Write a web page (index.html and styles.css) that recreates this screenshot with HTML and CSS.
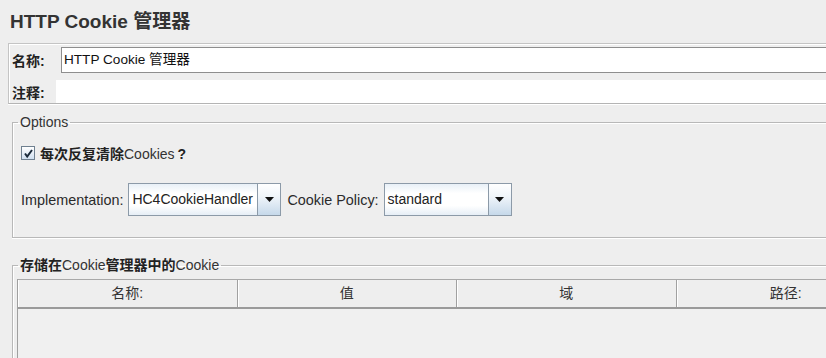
FILE: index.html
```html
<!DOCTYPE html>
<html>
<head>
<meta charset="utf-8">
<link rel="stylesheet" href="styles.css">
</head>
<body>
<div class="page">
  <h1 class="title">HTTP Cookie 管理器</h1>

  <div class="namepanel">
    <div class="row name-row">
      <span class="lbl">名称:</span>
      <div class="field">HTTP Cookie 管理器</div>
    </div>
    <div class="row comment-row">
      <span class="lbl">注释:</span>
      <div class="area"></div>
    </div>
  </div>

  <fieldset class="group options">
    <legend class="legend">Options</legend>
    <div class="check-row">
      <span class="checkbox">
        <svg width="11" height="11" viewBox="0 0 11 11"><path d="M2 5.5 L4.2 8.5 L9 2" fill="none" stroke="#1a2a3a" stroke-width="2"/></svg>
      </span>
      <span class="check-label"><b>每次反复清除</b>Cookies<b class="q">?</b></span>
    </div>
    <div class="combo-row">
      <span class="clbl">Implementation:</span>
      <div class="combo c1">
        <span class="combo-text">HC4CookieHandler</span>
        <span class="combo-btn"><svg width="9" height="5" viewBox="0 0 9 5"><path d="M0 0 H9 L4.5 5 Z" fill="#111"/></svg></span>
      </div>
      <span class="clbl">Cookie Policy:</span>
      <div class="combo c2">
        <span class="combo-text">standard</span>
        <span class="combo-btn"><svg width="9" height="5" viewBox="0 0 9 5"><path d="M0 0 H9 L4.5 5 Z" fill="#111"/></svg></span>
      </div>
    </div>
  </fieldset>

  <fieldset class="group stored">
    <legend class="legend"><b>存储在</b>Cookie<b>管理器中的</b>Cookie</legend>
    <div class="table">
      <div class="thead">
        <div class="th">名称:</div>
        <div class="th">值</div>
        <div class="th">域</div>
        <div class="th">路径:</div>
      </div>
      <div class="tbody"></div>
    </div>
  </fieldset>
</div>
</body>
</html>
```

FILE: styles.css
```css
html, body {
  margin: 0;
  padding: 0;
  background: #eeeeee;
  overflow: hidden;
}
body {
  width: 826px;
  height: 358px;
  font-family: "Liberation Sans", "Noto Sans CJK SC", sans-serif;
  color: #333333;
}
.page {
  width: 900px;
}
.title {
  margin: 11px 0 0 10px;
  font-size: 19px;
  line-height: 22px;
  font-weight: bold;
  color: #333;
  height: 22px;
}
.namepanel {
  margin: 10px 0 0 8px;
  border-top: 1px solid #c4c4c4;
  border-left: 1px solid #c4c4c4;
  border-bottom: 1px solid #b4b4b4;
  box-shadow: 0 1px 0 #ffffff, inset 1px 1px 0 #ffffff;
  padding: 3px 0 0 3px;
}
.row {
  display: flex;
  align-items: center;
}
.lbl {
  font-size: 14px;
  font-weight: bold;
  color: #222;
  width: 44px;
  flex: none;
}
.field {
  margin-left: 5px;
  flex: 1;
  height: 24px;
  background: #fff;
  border: 1px solid #8e8e8e;
  border-right: none;
  font-size: 13.6px;
  line-height: 24px;
  padding-left: 2px;
  color: #111;
}
.comment-row {
  margin-top: 7px;
}
.area {
  flex: 1;
  height: 23px;
  background: #fff;
}
.group {
  margin: 10px 0 0 12px;
  padding: 0;
  border: 1px solid #b8b8b8;
  border-right: none;
  box-shadow: inset 1px 1px 0 #fff, 0 1px 0 #fff;
  min-width: 0;
}
.legend {
  margin-left: 5px;
  padding: 0 2px;
  font-size: 14px;
  line-height: 16px;
  color: #333;
}
.legend b {
  color: #222;
}
.options {
  padding-bottom: 21px;
}
.check-row {
  display: flex;
  align-items: center;
  margin: 15px 0 0 8px;
  height: 16px;
}
.checkbox {
  width: 12px;
  height: 12px;
  border: 1px solid #6f8090;
  background: linear-gradient(#ffffff, #cfdff0);
  display: flex;
  align-items: center;
  justify-content: center;
  flex: none;
}
.check-label {
  margin-left: 5px;
  font-size: 14px;
  color: #333;
}
.check-label b {
  color: #222;
}
.check-label .q {
  margin-left: 3px;
}
.combo-row {
  display: flex;
  align-items: center;
  margin: 22px 0 0 8px;
}
.clbl {
  font-size: 14.4px;
  color: #2a2a2a;
  margin-right: 5px;
}
.combo {
  display: flex;
  height: 31px;
  border: 1px solid #8c9aa8;
  background: linear-gradient(#e8f0f7, #ffffff 30%, #ffffff 70%, #e6eef6);
  margin-right: 6px;
}
.c1 { width: 151px; }
.c2 { width: 126px; }
.combo-text {
  flex: 1;
  font-size: 14px;
  line-height: 31px;
  padding-left: 3px;
  color: #222;
}
.combo-btn {
  width: 22px;
  border-left: 1px solid #8c9aa8;
  background: linear-gradient(#ffffff, #f0f5fa 40%, #c6d9ea);
  display: flex;
  align-items: center;
  justify-content: center;
}
.stored {
  margin-top: 19px;
  padding: 6px 0 0 0;
  height: 120px;
}
.table {
  margin-left: 4px;
  border-left: 1px solid #a0a0a0;
}
.thead {
  display: flex;
  height: 27px;
  border-top: 1px solid #a8a8a8;
  border-bottom: 2px solid #9a9a9a;
  background: #eeeeee;
}
.th {
  box-sizing: border-box;
  width: 219.5px;
  flex: none;
  border-right: 1px solid #a0a0a0;
  box-shadow: inset 1px 0 0 #fff;
  text-align: center;
  font-size: 14px;
  line-height: 27px;
  color: #333;
}
.tbody {
  height: 60px;
  background: #f0f0f0;
}
```
